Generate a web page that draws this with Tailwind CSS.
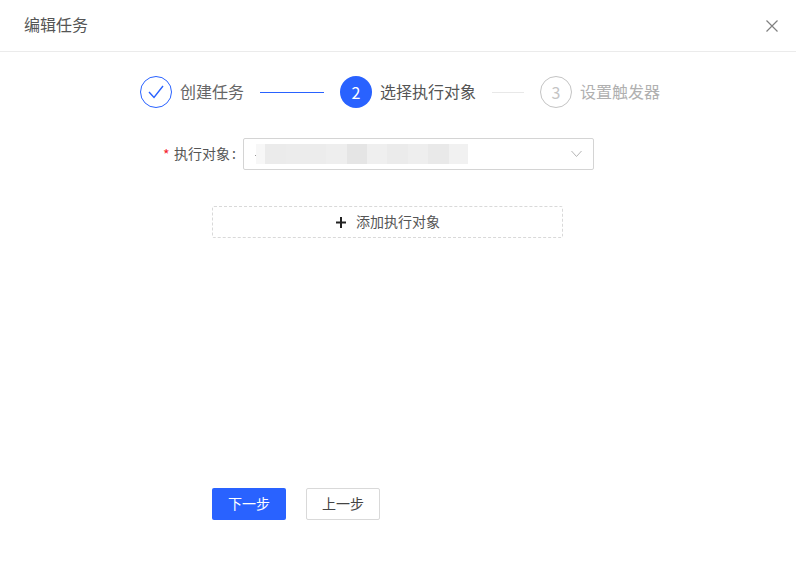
<!DOCTYPE html>
<html lang="zh-CN">
<head>
  <meta charset="UTF-8" />
  <title>编辑任务</title>
  <script src="https://cdn.jsdelivr.net/npm/@tailwindcss/browser@4"></script>
</head>
<body class="bg-white font-['Noto_Sans_CJK_SC','Noto_Sans',sans-serif] text-[#333]">
  <div class="w-[796px] h-[568px] overflow-hidden flex flex-col">

    <!-- header -->
    <div class="h-[52px] shrink-0 flex items-center justify-between pl-6 pr-[17px] border-b border-[#ebebeb]">
      <span class="text-base text-[#555] pb-1">编辑任务</span>
      <svg width="14" height="14" viewBox="0 0 14 14" fill="none" stroke="#808080" stroke-width="1.2"><path d="M1.5 1.5L12.5 12.5M12.5 1.5L1.5 12.5" /></svg>
    </div>

    <!-- steps -->
    <div class="mt-6 ml-[140px] flex items-center h-8 text-base">
      <div class="w-8 h-8 rounded-full border border-[#2962ff] flex items-center justify-center">
        <svg width="18" height="16" viewBox="0 0 18 16" fill="none" stroke="#2962ff" stroke-width="1.4"><path d="M2 8L7 13.5L16 2" /></svg>
      </div>
      <span class="ml-2 pb-[2px] text-[#666]">创建任务</span>
      <div class="mx-4 w-16 h-px bg-[#2962ff]"></div>
      <div class="w-8 h-8 rounded-full bg-[#2962ff] text-white flex items-center justify-center">2</div>
      <span class="ml-2 pb-[2px] text-[#555]">选择执行对象</span>
      <div class="mx-4 w-8 h-px bg-[#e8e8e8]"></div>
      <div class="w-8 h-8 rounded-full border border-[#c4c4c4] text-[#c4c4c4] flex items-center justify-center">3</div>
      <span class="ml-2 pb-[2px] text-[#b0b0b0]">设置触发器</span>
    </div>

    <!-- form -->
    <div class="mt-[30px] ml-[163px] flex items-center h-8">
      <span class="text-[#f5222d] text-sm w-[11px]">*</span>
      <span class="text-sm text-[#555] w-[69px] pb-[2px]">执行对象<span class="ml-[2px]">:</span></span>
      <div class="w-[351px] h-8 border border-[#d4d4d4] rounded-[2px] flex items-center justify-between pl-[11px] pr-[11px]">
        <div class="flex h-5">
          <div class="w-px h-px mt-[11px] bg-[#999]"></div>
          <div class="w-[9px] bg-[#f7f7f7]"></div>
          <div class="w-[21px] bg-[#ebebeb]"></div>
          <div class="w-[40px] bg-[#ececec]"></div>
          <div class="w-[21px] bg-[#eeeeee]"></div>
          <div class="w-[20px] bg-[#e5e5e5]"></div>
          <div class="w-[20px] bg-[#efefef]"></div>
          <div class="w-[21px] bg-[#ebebeb]"></div>
          <div class="w-[20px] bg-[#eeeeee]"></div>
          <div class="w-[21px] bg-[#e9e9e9]"></div>
          <div class="w-[19px] bg-[#f1f1f1]"></div>
        </div>
        <svg width="11" height="8" viewBox="0 0 11 8" fill="none" stroke="#b5b5b5" stroke-width="1"><path d="M0.5 1L5.5 6.5L10.5 1" /></svg>
      </div>
    </div>

    <button class="mt-9 ml-[212px] w-[351px] h-8 pl-px border border-dashed border-[#d9d9d9] rounded-[2px] flex items-center justify-center gap-[10px] text-sm text-[#555]">
      <svg width="10" height="11" viewBox="0 0 10 11" fill="none" stroke="#222" stroke-width="2"><path d="M5 0V11M0 5.5H10" /></svg>
      <span class="pb-[2px]">添加执行对象</span>
    </button>

    <!-- footer buttons -->
    <div class="mt-[250px] ml-[212px] flex gap-5">
      <button class="w-[74px] h-8 pb-[2px] bg-[#2962ff] text-white text-sm rounded-[2px]">下一步</button>
      <button class="w-[74px] h-8 pb-[2px] border border-[#d9d9d9] text-sm text-[#444] rounded-[2px]">上一步</button>
    </div>
  </div>
</body>
</html>
